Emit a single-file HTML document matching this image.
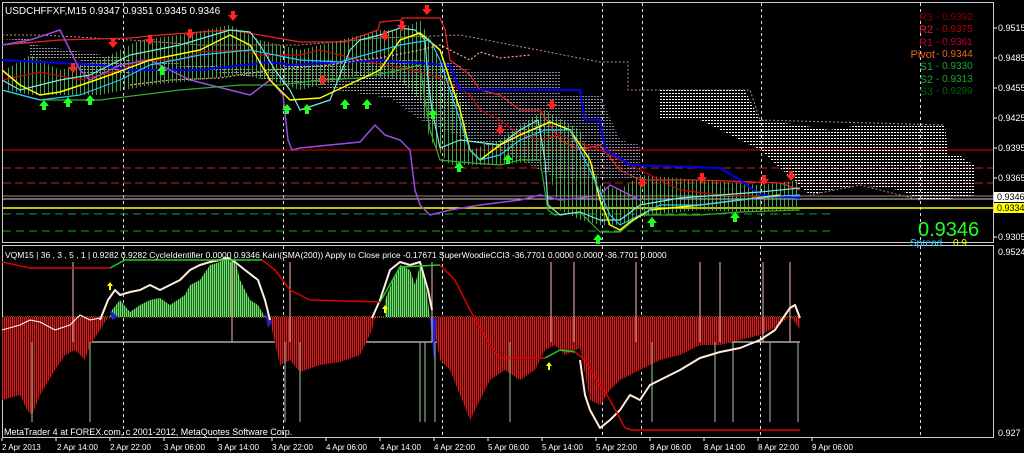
<!DOCTYPE html>
<html><head><meta charset="utf-8"><style>
html,body{margin:0;padding:0;background:#000;}
svg{display:block;font-family:"Liberation Sans",sans-serif;}
</style></head><body>
<svg width="1024" height="453" viewBox="0 0 1024 453" xmlns="http://www.w3.org/2000/svg">
<defs>
<pattern id="gb" width="4" height="4" patternUnits="userSpaceOnUse"><rect width="1" height="4" fill="#5c5"/></pattern>
<pattern id="gb2" width="2" height="4" patternUnits="userSpaceOnUse"><rect width="2" height="4" fill="#1a6a1a"/><rect width="1" height="4" fill="#7d7"/></pattern>
<pattern id="rb" width="2" height="4" patternUnits="userSpaceOnUse"><rect width="2" height="4" fill="#500"/><rect width="1" height="4" fill="#c22"/></pattern>
<pattern id="wd" width="3" height="3" patternUnits="userSpaceOnUse"><rect width="2" height="1" fill="#fff"/></pattern>
<pattern id="bd" width="3" height="3" patternUnits="userSpaceOnUse"><rect width="2" height="1" fill="#aac"/></pattern>
<g id="da"><path d="M-2,-7h4v4h3l-5,6l-5,-6h3z" fill="#f22"/></g>
<g id="ua"><path d="M-2,7h4v-4h3l-5,-6l-5,6h3z" fill="#2f2"/></g>
</defs>
<rect width="1024" height="453" fill="#000"/>
<rect x="2.5" y="2.5" width="991" height="240" fill="none" stroke="#ccc"/>
<rect x="2.5" y="245.5" width="991" height="192" fill="none" stroke="#ccc"/>
<g stroke="#ddd" stroke-dasharray="3,3" stroke-width="1">
<path d="M123.5 3v240M283.5 3v240M442.5 3v240M602.5 3v240M642.5 3v240M761.5 3v240M920.5 3v240"/>
<path d="M123.5 246v191M283.5 246v191M442.5 246v191M602.5 246v191M641.5 246v191M760.5 246v191M920.5 246v191"/>
</g>
<path d="M3 150H993" stroke="#b00" stroke-width="1.2"/>
<path d="M3 168H993M3 183H993" stroke="#c22" stroke-dasharray="8,4"/>
<path d="M3 196H993" stroke="#a87" stroke-width="1"/>
<path d="M3 199H993" stroke="#ccd" stroke-width="1"/>
<path d="M3 208H993" stroke="#ff0" stroke-width="1.5"/>
<path d="M3 214H830M3 231H830" stroke="#1a1" stroke-dasharray="8,5"/>
<path d="M360 60L380 58L450 62L470 70L560 72L560 95L600 95L620 140L640 145L640 180L560 180L500 150L470 140L420 120L380 90L360 80Z" fill="url(#bd)" opacity="0.8"/>
<path d="M660 90L745 90L760 120L800 125L830 130L860 125L945 125L948 155L960 155L965 160L975 165L975 195L940 200L920 200L900 190L860 185L830 190L810 195L760 150L700 120L660 118Z" fill="url(#wd)"/>
<path d="M2 35L40 35L130 40L200 45L300 45L380 38L460 35L600 62L628 62L628 90L750 90L760 120L945 125M920 200L860 185L810 195" fill="none" stroke="#c88" stroke-dasharray="2,2"/>
<path d="M2 40L30 38L30 60L80 60L80 75L130 75L130 60L200 65L260 70L330 60L380 80L440 80L460 90L470 110" fill="url(#wd)" opacity="0.6"/>
<path d="M5 70L30 55L60 70L100 60L140 40L180 35L230 25L260 40L300 50L340 40L380 30L400 30L420 20L430 40L440 60L460 100L470 150L500 140L520 125L545 110L580 130L600 185L620 190L640 175L700 180L760 185L800 180L800 210L740 212L700 210L650 215L620 225L600 225L580 220L560 210L545 160L500 165L470 165L450 165L430 140L420 100L400 80L360 75L300 90L270 80L240 75L200 80L150 85L100 95L60 95L30 95L5 90Z" fill="url(#gb)" opacity="0.8"/>
<g fill="none" stroke-width="1.2" stroke-linejoin="round">
<polyline stroke="#e22" points="2,45 60,40 130,38 160,35 230,30 260,35 300,42 345,42 378,30 380,22 402,20 402,18 440,18 445,30 450,60 470,75 480,90 500,95 520,110 540,110 560,140 580,150 600,145 620,170 640,180 700,180 780,183 800,190"/>
<polyline stroke="#c00" points="2,80 40,72 80,80 120,70 140,60 180,60 200,52 240,50 260,55 300,55 320,50 360,60 400,68 420,72 440,78 470,95 480,110 500,120 520,135 540,140 560,135 600,150 620,160 640,170 680,190 720,195 800,198"/>
<polyline stroke="#00e" stroke-width="2" points="2,60 100,65 130,70 200,70 270,62 290,65 380,60 400,62 450,65 460,90 580,90 585,120 600,120 605,150 620,158 630,165 720,168 740,180 760,195 800,198"/>
<polyline stroke="#9b4de0" stroke-width="1.5" points="2,45 30,40 60,30 65,40 70,50 80,70 90,80 100,75 120,65 150,60 170,70 190,80 210,85 230,90 250,95 270,80 283,95 288,140 292,150 300,148 330,145 360,142 375,125 385,135 400,140 410,150 415,190 420,205 430,215 450,210 480,205 520,200 540,195 560,200 580,198 600,195 610,185 620,190 640,200"/>
<polyline stroke="#3a3" points="2,90 40,100 100,100 140,95 180,90 240,85 280,85 320,80 360,78 400,70 420,65 425,100 430,130 440,160 460,162 500,165 520,160 540,160 548,210 555,215 580,212 600,232 620,232 640,215 700,215 740,212 800,210"/>
<polyline stroke="#7ed" points="2,80 20,90 40,85 60,80 90,75 130,55 180,45 230,30 250,32 260,45 275,70 290,90 300,110 330,100 350,50 360,40 380,35 400,28 415,30 425,40 428,80 432,110 440,148 460,140 500,145 520,130 538,120 545,160 548,205 560,215 580,212 600,220 620,220 640,205 680,198 720,195 760,192 800,188"/>
<polyline stroke="#ff0" stroke-width="1.5" points="2,70 20,85 40,95 60,92 90,82 110,75 150,60 200,50 230,35 250,45 270,80 290,100 320,98 380,70 400,40 420,33 440,50 460,110 470,150 480,160 500,145 520,135 550,122 570,130 590,160 600,200 610,225 620,230 630,222 650,210 700,205 740,200 780,195"/>
<polyline stroke="#2cf" points="2,90 40,100 80,95 120,80 150,65 200,55 250,50 300,60 340,62 400,45 430,40 440,60 470,150 480,160 500,155 520,140 545,130 570,130 590,170 610,215 620,225 640,215 660,205 700,205 740,200 780,196 800,195"/>
<polyline stroke="#fa8" stroke-dasharray="2,2" points="130,85 170,80 220,78 270,70 330,65 360,60 380,58 420,50 440,45 470,60 480,52 500,58 530,55"/>
</g>
<use href="#da" x="73" y="70"/><use href="#da" x="113" y="45"/><use href="#da" x="150" y="42"/><use href="#da" x="190" y="36"/><use href="#da" x="233" y="18"/><use href="#da" x="323" y="82"/><use href="#da" x="385" y="38"/><use href="#da" x="402" y="28"/><use href="#da" x="427" y="12"/><use href="#da" x="500" y="132"/><use href="#da" x="552" y="107"/><use href="#da" x="642" y="185"/><use href="#da" x="702" y="180"/><use href="#da" x="764" y="182"/><use href="#da" x="791" y="178"/>
<use href="#ua" x="44" y="103"/><use href="#ua" x="68" y="100"/><use href="#ua" x="90" y="98"/><use href="#ua" x="162" y="68"/><use href="#ua" x="287" y="107"/><use href="#ua" x="307" y="107"/><use href="#ua" x="345" y="102"/><use href="#ua" x="367" y="102"/><use href="#ua" x="433" y="112"/><use href="#ua" x="459" y="165"/><use href="#ua" x="508" y="157"/><use href="#ua" x="598" y="237"/><use href="#ua" x="652" y="220"/><use href="#ua" x="735" y="215"/>
<text x="5" y="14" fill="#fff" font-size="10">USDCHFFXF,M15  0.9347 0.9351 0.9345 0.9346</text>
<g font-size="11" text-anchor="end">
<text x="933" y="21" fill="#8b0000">R3</text><text x="933" y="33" fill="#d22">R2</text><text x="933" y="46" fill="#b03">R1</text>
<text x="935" y="58" fill="#f06020">Pivot</text><text x="933" y="70" fill="#1a3">S1</text><text x="933" y="83" fill="#1a3">S2</text><text x="933" y="95" fill="#060">S3</text>
</g>
<g font-size="10">
<text x="936" y="20" fill="#8b0000">- 0.9392</text><text x="936" y="32" fill="#b00">- 0.9375</text><text x="936" y="45" fill="#b03">- 0.9361</text>
<text x="936" y="57" fill="#f06020">- 0.9344</text><text x="936" y="69" fill="#1a3">- 0.9330</text><text x="936" y="82" fill="#1a3">- 0.9313</text><text x="936" y="94" fill="#060">- 0.9299</text>
</g>
<text x="918" y="236" fill="#2f2" font-size="20">0.9346</text>
<text x="910" y="246" fill="#3cf" font-size="10">Spread</text><text x="953" y="246" fill="#ff0" font-size="10">0.9</text>
<g font-size="9" fill="#fff">
<text x="998" y="31">0.9515</text><text x="998" y="61">0.9485</text><text x="998" y="91">0.9455</text><text x="998" y="121">0.9425</text><text x="998" y="151">0.9395</text><text x="998" y="181">0.9365</text><text x="998" y="240">0.9305</text>
<text x="998" y="255">0.9524</text><text x="998" y="436">0.927</text>
</g>
<g stroke="#fff"><path d="M994 28h3M994 58h3M994 88h3M994 118h3M994 148h3M994 178h3M994 237h3"/></g>
<rect x="994" y="192" width="30" height="10" fill="#fff"/><text x="997" y="200" font-size="9" fill="#000">0.9346</text>
<rect x="994" y="203" width="30" height="10" fill="#ff0"/><text x="997" y="211" font-size="9" fill="#000">0.9334</text>
<path d="M3 317H800" stroke="#fa0" stroke-dasharray="1,1"/>
<path d="M3 342H800" stroke="#fff"/>
<path d="M2 317L2 400L20 395L27 410L32 415L40 395L55 370L65 355L75 350L85 360L90 345L100 330L108 317Z" fill="url(#rb)"/>
<path d="M270 317L272 330L280 365L290 360L300 372L320 365L340 362L360 355L372 330L375 317Z" fill="url(#rb)"/>
<path d="M432 317L440 360L450 370L460 395L470 420L475 410L490 380L505 370L520 380L535 370L545 350L555 345L565 355L580 348L590 400L600 405L610 390L620 380L640 370L660 360L680 355L700 345L720 345L740 340L760 335L780 325L790 315L800 330L800 317Z" fill="url(#rb)"/>
<path d="M110 317L112 310L120 300L130 312L140 305L150 300L160 298L170 305L185 295L190 285L200 280L210 265L220 262L225 256L230 262L235 258L240 280L250 300L258 305L265 317Z" fill="url(#gb2)"/>
<path d="M385 317L385 300L395 275L400 265L410 270L415 285L420 265L425 280L430 317Z" fill="url(#gb2)"/>
<path d="M110 310L118 317L112 320ZM265 312L272 322L268 328ZM430 318L437 318L434 362Z" fill="#22c"/>
<g stroke="#d99" stroke-width="1.2"><path d="M73 262v80M232 262v80M290 262v80M432 262v80M551 262v80M574 262v80M636 262v80M700 262v80M720 262v80M763 262v80M790 262v80"/></g>
<g stroke="#8a8" stroke-width="1.2"><path d="M32 342v80M90 342v80M285 342v80M300 342v80M420 342v80M425 342v80M435 342v80M510 342v80M652 342v80M715 342v80M733 342v80M770 342v80M798 342v80"/></g>
<g fill="none" stroke-linejoin="round">
<polyline stroke="#fff" stroke-width="1" points="2,330 20,325 30,320 40,322 55,330 70,325 80,315 90,320 100,318"/>
<polyline stroke="#fed" stroke-width="2" points="100,320 108,300 115,290 120,295 130,292 140,290 150,285 160,290 170,285 180,280 190,270 200,265 210,262 220,260 228,258 235,262 245,270 258,280 265,300 270,320"/>
<polyline stroke="#fed" stroke-width="2" points="372,318 380,300 390,270 400,262 410,265 420,262 428,290 432,310"/>
<polyline stroke="#fed" stroke-width="2" points="580,360 585,395 590,410 600,428 610,420 620,410 630,395 640,400 650,385 660,380 680,370 700,358 720,352 740,348 760,340 775,330 785,315 790,308 795,305 800,318"/>
<polyline stroke="#d00" stroke-width="1.5" points="2,262 30,268 110,268"/>
<polyline stroke="#2c2" stroke-width="1.5" points="110,268 125,260 262,260"/>
<polyline stroke="#d00" stroke-width="1.5" points="262,260 275,270 290,290 310,300 380,302"/>
<polyline stroke="#2c2" stroke-width="1.5" points="380,302 400,267 440,265"/>
<polyline stroke="#d00" stroke-width="1.5" points="440,265 455,280 470,310 490,345 500,358 545,358"/>
<polyline stroke="#2c2" stroke-width="1.5" points="545,358 560,350 575,352"/>
<polyline stroke="#d00" stroke-width="1.5" points="575,352 585,360 600,385 610,400 625,428 632,430 800,430"/>
</g>
<path d="M110 282l-3 4h2v4h2v-4h2z M385 305l-3 4h2v4h2v-4h2z M549 362l-3 4h2v4h2v-4h2z" fill="#ff0"/>
<text x="5" y="258" fill="#fff" font-size="8.5">VQM15 | 36 , 3 , 5 , 1 | 0.9282 0.9282 CycleIdentifier 0.0000 0.9346 Kairi(SMA(200)) Apply to Close price -0.17671 SuperWoodieCCI3 -36.7701 0.0000 0.0000 -36.7701 0.0000</text>
<text x="4" y="435" fill="#fff" font-size="9">MetaTrader 4 at FOREX.com, c 2001-2012, MetaQuotes Software Corp.</text>
<g font-size="8" fill="#fff">
<text x="2" y="450">2 Apr 2013</text><text x="57" y="450">2 Apr 14:00</text><text x="110" y="450">2 Apr 22:00</text><text x="164" y="450">3 Apr 06:00</text><text x="218" y="450">3 Apr 14:00</text><text x="272" y="450">3 Apr 22:00</text><text x="326" y="450">4 Apr 06:00</text><text x="380" y="450">4 Apr 14:00</text><text x="434" y="450">4 Apr 22:00</text><text x="488" y="450">5 Apr 06:00</text><text x="542" y="450">5 Apr 14:00</text><text x="596" y="450">5 Apr 22:00</text><text x="650" y="450">8 Apr 06:00</text><text x="704" y="450">8 Apr 14:00</text><text x="758" y="450">8 Apr 22:00</text><text x="812" y="450">9 Apr 06:00</text>
</g>
<g stroke="#fff"><path d="M2 438v3M56 438v3M110 438v3M164 438v3M218 438v3M272 438v3M326 438v3M380 438v3M434 438v3M488 438v3M542 438v3M596 438v3M650 438v3M704 438v3M758 438v3M812 438v3"/></g>
</svg>
</body></html>
